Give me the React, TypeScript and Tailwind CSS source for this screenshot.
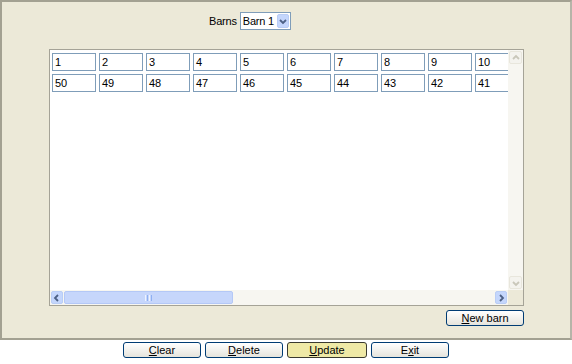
import React from "react";

const font = { fontFamily: '"Liberation Sans", Arial, sans-serif' };

function Chevron({ dir, color }: { dir: "up" | "down" | "left" | "right"; color: string }) {
  const paths: Record<string, string> = {
    down: "M2 4 L5 7 L8 4",
    up: "M2 6 L5 3 L8 6",
    left: "M6 2 L3 5 L6 8",
    right: "M4 2 L7 5 L4 8",
  };
  return (
    <svg width="10" height="10" viewBox="0 0 10 10">
      <path d={paths[dir]} fill="none" stroke={color} strokeWidth="1.8" />
    </svg>
  );
}

function XPButton({
  label,
  ul,
  yellow,
  wide,
}: {
  label: string;
  ul: number;
  yellow?: boolean;
  wide?: boolean;
}) {
  return (
    <div
      className={
        "flex h-[16px] items-center justify-center rounded-[3px] border text-[11px] leading-none text-black " +
        (wide ? "w-[80px] " : "w-[78px] ") +
        (yellow
          ? "border-[#3a3a30] bg-[#efe9a6]"
          : "border-[#003c74] bg-gradient-to-b from-white to-[#e6e4dc]")
      }
    >
      <span>
        {label.slice(0, ul)}
        <span className="underline">{label[ul]}</span>
        {label.slice(ul + 1)}
      </span>
    </div>
  );
}

export default function App() {
  const row1 = ["1", "2", "3", "4", "5", "6", "7", "8", "9", "10"];
  const row2 = ["50", "49", "48", "47", "46", "45", "44", "43", "42", "41"];
  const Cell = ({ v }: { v: string }) => (
    <div className="flex h-[18px] w-[44px] shrink-0 items-center border border-[#7f9db9] bg-white pl-[2px] text-[11px] leading-none text-black">
      {v}
    </div>
  );
  return (
    <div className="h-[364px] w-[572px] bg-white" style={font}>
      <div className="flex h-[340px] w-[572px] flex-col border-2 border-t-[#a3a192] border-l-[#a3a192] border-r-[#b6b4a8] border-b-[#a3a192] bg-[#ece9d8]">
        <div className="ml-[207px] mt-[10px] flex h-[18px] items-center gap-[3px] tracking-[-0.2px]">
          <span className="text-[11px] leading-none text-black">Barns</span>
          <div className="flex h-[18px] w-[51px] items-center border border-[#7f9db9] bg-white">
            <span className="flex-1 pl-[2px] text-[11px] leading-none text-black">Barn 1</span>
            <div className="mr-[1px] flex h-[14px] w-[12px] items-center justify-center rounded-[2px] border border-[#b9cdf5] bg-[#c4d6fc]">
              <Chevron dir="down" color="#4d6185" />
            </div>
          </div>
        </div>
        <div className="ml-[47px] mt-[19px] flex w-[475px] flex-col">
          <div className="flex h-[257px] w-[475px] flex-col border border-[#a5a397] bg-white">
            <div className="flex h-[240px]">
              <div className="w-[458px] overflow-hidden pl-[2px] pt-[3px]">
                <div className="flex gap-[3px]">
                  {row1.map((v) => (
                    <Cell key={v} v={v} />
                  ))}
                </div>
                <div className="mt-[3px] flex gap-[3px]">
                  {row2.map((v) => (
                    <Cell key={v} v={v} />
                  ))}
                </div>
              </div>
              <div className="flex w-[15px] flex-col justify-between bg-[#f7f6f1] px-[1px] pb-[1px] pt-[1px]">
                <div className="flex h-[13px] w-[13px] items-center justify-center rounded-[2px] border border-[#e8e6dc] bg-[#f4f3ee]">
                  <Chevron dir="up" color="#c9c7ba" />
                </div>
                <div className="flex h-[13px] w-[13px] items-center justify-center rounded-[2px] border border-[#e8e6dc] bg-[#f4f3ee]">
                  <Chevron dir="down" color="#c9c7ba" />
                </div>
              </div>
            </div>
            <div className="flex h-[15px]">
              <div className="flex w-[458px] items-center bg-[#f7f6f1] px-[1px]">
                <div className="flex h-[13px] w-[12px] items-center justify-center rounded-[2px] border border-[#b9cdf5] bg-[#c4d6fc]">
                  <Chevron dir="left" color="#4d6185" />
                </div>
                <div className="ml-[1px] flex h-[13px] w-[169px] items-center justify-center rounded-[2px] border border-[#b4c8f6] bg-[#c6d6fb]">
                  <div className="flex gap-[1px]">
                    <div className="h-[6px] w-[1px] bg-[#eef3fe]" />
                    <div className="h-[6px] w-[1px] bg-[#8fb0f1]" />
                    <div className="h-[6px] w-[1px] bg-[#eef3fe]" />
                    <div className="h-[6px] w-[1px] bg-[#8fb0f1]" />
                  </div>
                </div>
                <div className="flex-1" />
                <div className="flex h-[13px] w-[12px] items-center justify-center rounded-[2px] border border-[#b9cdf5] bg-[#c4d6fc]">
                  <Chevron dir="right" color="#4d6185" />
                </div>
              </div>
              <div className="w-[15px] bg-[#ece9d8]" />
            </div>
          </div>
          <div className="mt-[4px] self-end">
            <XPButton label="New barn" ul={0} />
          </div>
        </div>
      </div>
      <div className="mt-[2px] flex justify-center gap-[4px]">
        <XPButton label="Clear" ul={0} />
        <XPButton label="Delete" ul={0} />
        <XPButton label="Update" ul={0} yellow wide />
        <XPButton label="Exit" ul={1} />
      </div>
    </div>
  );
}
